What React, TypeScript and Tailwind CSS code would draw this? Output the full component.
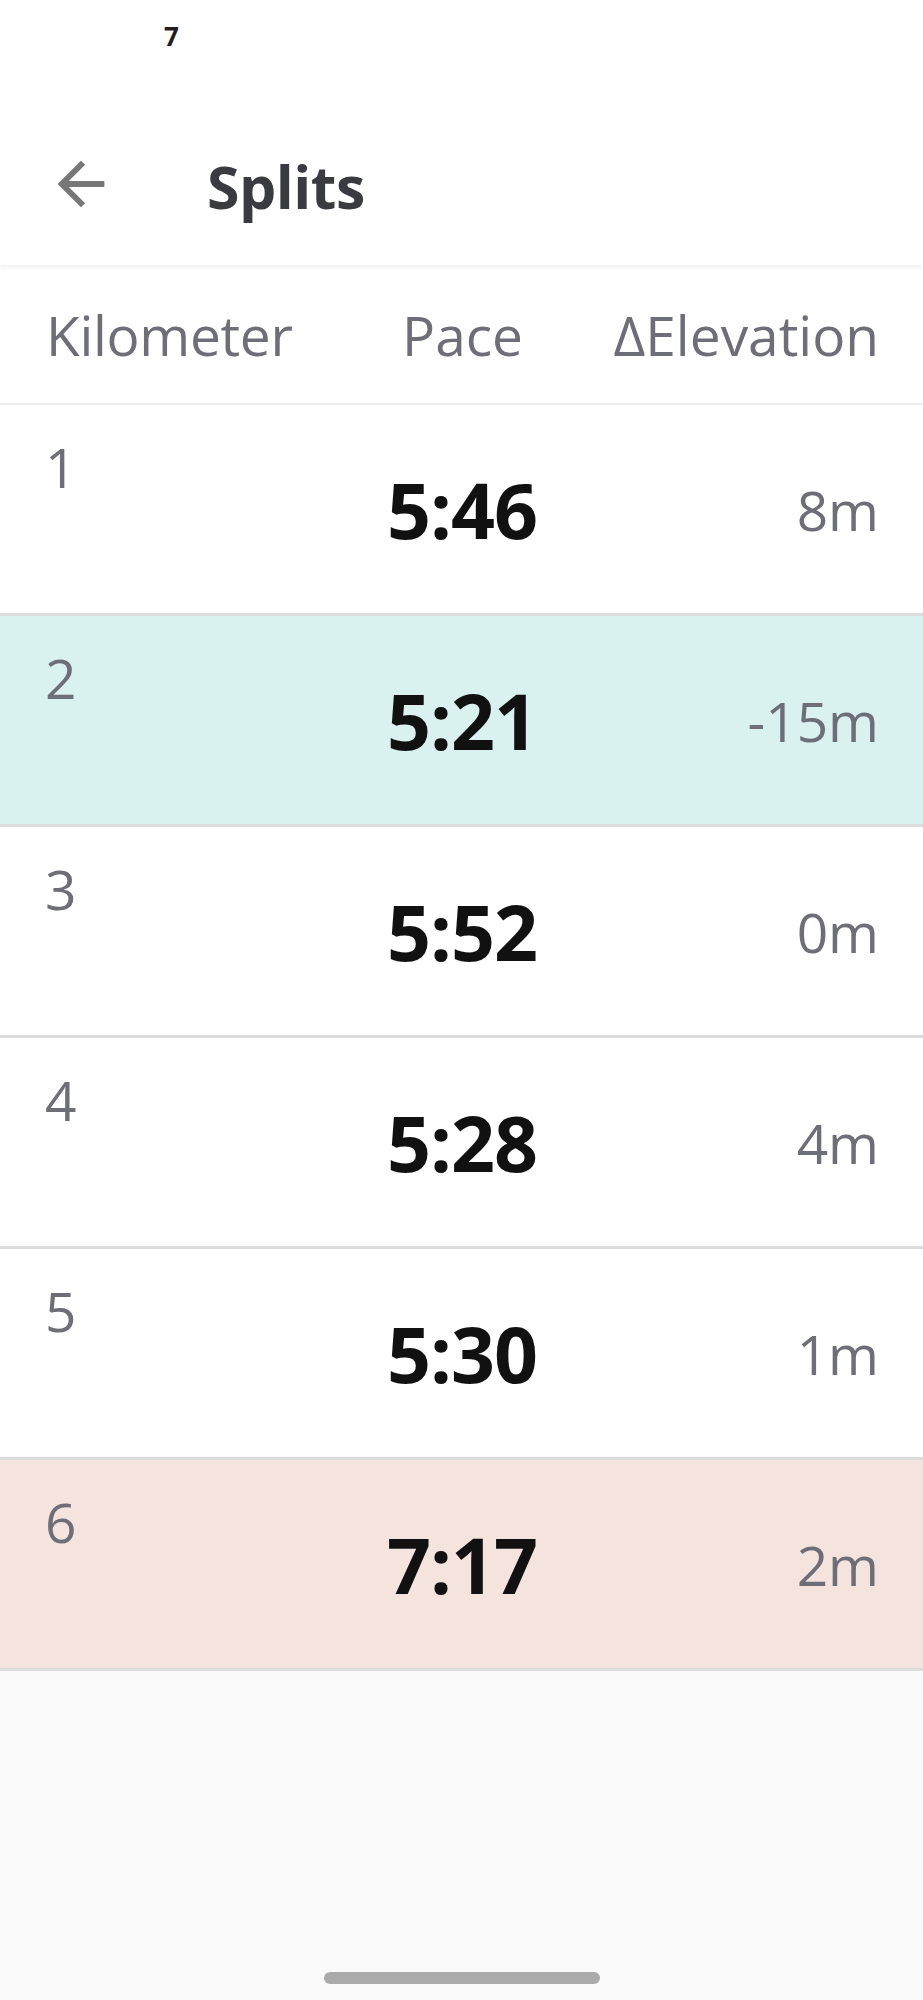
import React from "react";

type Split = { km: number; pace: string; elev: string; bg: string };

const splits: Split[] = [
  { km: 1, pace: "5:46", elev: "8m", bg: "bg-white" },
  { km: 2, pace: "5:21", elev: "-15m", bg: "bg-[#daf2ef]" },
  { km: 3, pace: "5:52", elev: "0m", bg: "bg-white" },
  { km: 4, pace: "5:28", elev: "4m", bg: "bg-white" },
  { km: 5, pace: "5:30", elev: "1m", bg: "bg-white" },
  { km: 6, pace: "7:17", elev: "2m", bg: "bg-[#f5e3de]" },
];

export default function App() {
  return (
    <div
      className="w-[923px] h-[2000px] bg-[#fafafa] flex flex-col overflow-hidden"
      style={{ fontFamily: '"Open Sans", "Noto Sans", sans-serif' }}
    >
      <header className="relative z-10 h-[265px] shrink-0 bg-white shadow-[0_2px_5px_rgba(0,0,0,0.07)] flex flex-col">
        <div className="h-[100px] pt-[23px] pl-[164px] text-[26px] font-bold leading-none text-[#1e1e1e]">
          7
        </div>
        <div className="flex items-start mt-[49px] ml-[46px]">
          <svg viewBox="0 0 24 24" className="w-[70px] h-[70px]" fill="#777777">
            <path d="M20 11H7.83l5.59-5.59L12 4l-8 8 8 8 1.41-1.41L7.83 13H20v-2z" />
          </svg>
          <h1 className="ml-[91px] mt-[8px] text-[59px] font-bold leading-none tracking-[-0.5px] text-[#3a3a41]">
            Splits
          </h1>
        </div>
      </header>

      <div className="bg-white h-[140px] shrink-0 border-b-2 border-[#efefef] grid grid-cols-3 items-center pl-[46px] pr-[44px] text-[55px] leading-none text-[#6e6e78]">
        <div className="tracking-[-0.3px]">Kilometer</div>
        <div className="text-center">Pace</div>
        <div className="text-right">ΔElevation</div>
      </div>

      {splits.map((s) => (
        <div
          key={s.km}
          className={`${s.bg} h-[211px] shrink-0 border-b-[3px] border-[#dcdcdc] grid grid-cols-3 pl-[45px] pr-[44px]`}
        >
          <div className="pt-[34px] text-[55px] leading-none text-[#6e6e78]">{s.km}</div>
          <div className="flex items-center justify-center text-[77px] font-bold leading-none tracking-[-1px] text-[#111111]">
            {s.pace}
          </div>
          <div className="flex items-center justify-end text-[55px] leading-none text-[#6e6e78]">
            {s.elev}
          </div>
        </div>
      ))}

      <div className="flex-1 flex flex-col justify-end items-center pb-[16px]">
        <div className="w-[276px] h-[12px] rounded-full bg-[#aaaaaa]" />
      </div>
    </div>
  );
}
